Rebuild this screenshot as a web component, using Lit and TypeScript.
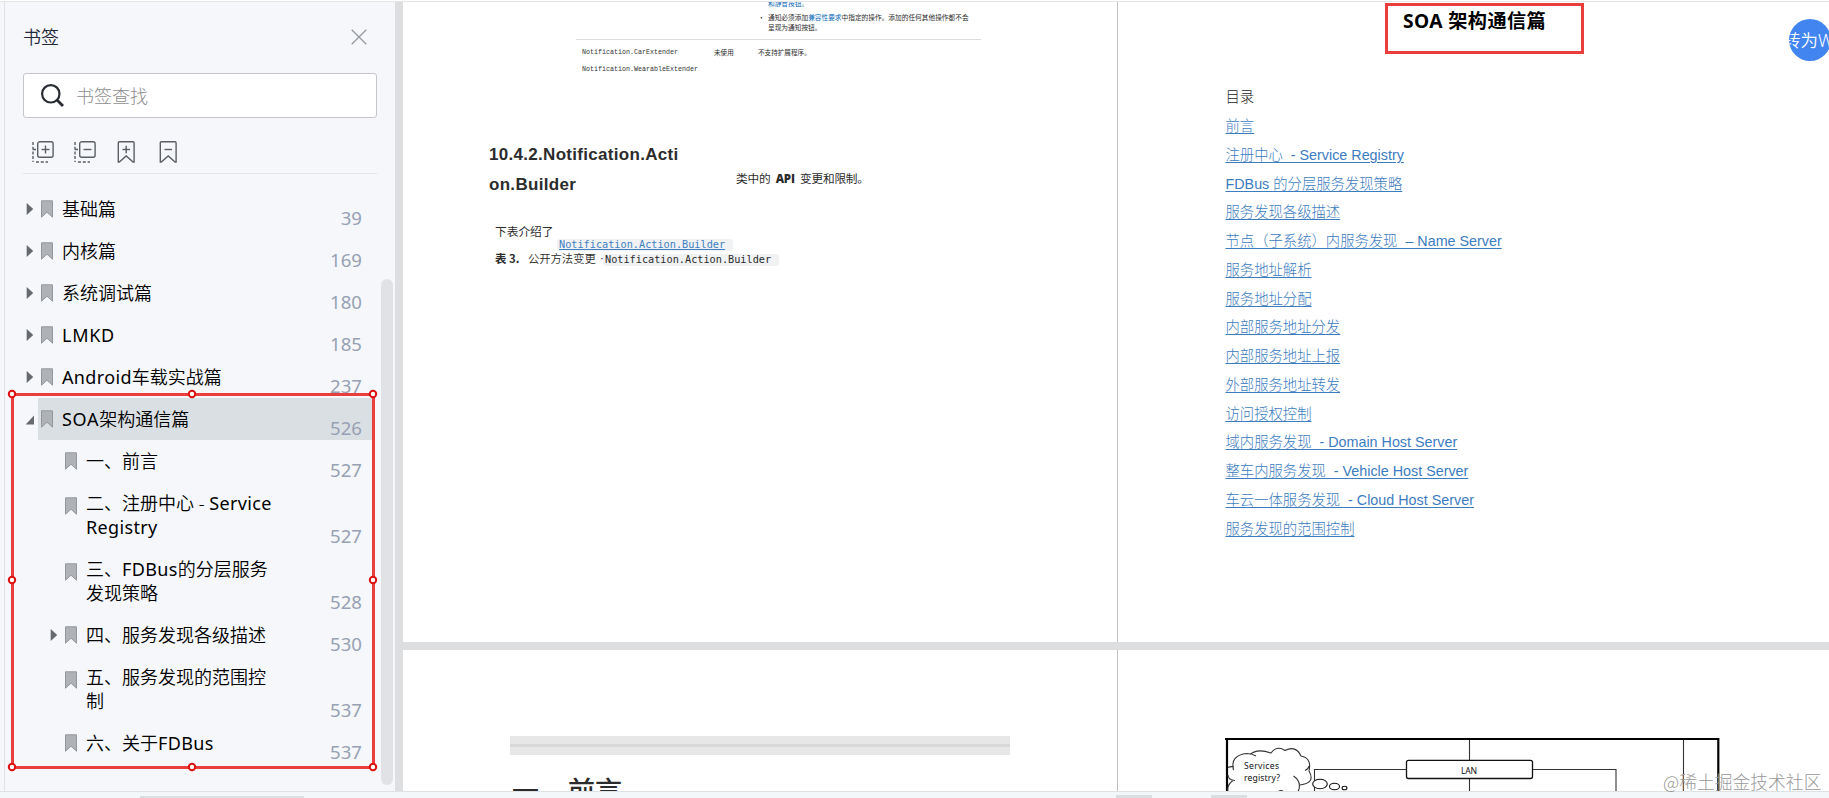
import { LitElement, html, svg, css } from "lit";
import { customElement } from "lit/decorators.js";
import { classMap } from "lit/directives/class-map.js";

interface Mark {
  lines: string[];
  page: number;
  level: number;
  arrow?: "closed" | "open";
  selected?: boolean;
}

const MARKS: Mark[] = [
  { lines: ["基础篇"], page: 39, level: 0, arrow: "closed" },
  { lines: ["内核篇"], page: 169, level: 0, arrow: "closed" },
  { lines: ["系统调试篇"], page: 180, level: 0, arrow: "closed" },
  { lines: ["LMKD"], page: 185, level: 0, arrow: "closed" },
  { lines: ["Android车载实战篇"], page: 237, level: 0, arrow: "closed" },
  { lines: ["SOA架构通信篇"], page: 526, level: 0, arrow: "open", selected: true },
  { lines: ["一、前言"], page: 527, level: 1 },
  { lines: ["二、注册中心 - Service", "Registry"], page: 527, level: 1 },
  { lines: ["三、FDBus的分层服务", "发现策略"], page: 528, level: 1 },
  { lines: ["四、服务发现各级描述"], page: 530, level: 1, arrow: "closed" },
  { lines: ["五、服务发现的范围控", "制"], page: 537, level: 1 },
  { lines: ["六、关于FDBus"], page: 537, level: 1 },
];

const TOC = [
  "前言",
  "注册中心  - Service Registry",
  "FDBus 的分层服务发现策略",
  "服务发现各级描述",
  "节点（子系统）内服务发现  – Name Server",
  "服务地址解析",
  "服务地址分配",
  "内部服务地址分发",
  "内部服务地址上报",
  "外部服务地址转发",
  "访问授权控制",
  "域内服务发现  - Domain Host Server",
  "整车内服务发现  - Vehicle Host Server",
  "车云一体服务发现  - Cloud Host Server",
  "服务发现的范围控制",
];

const HANDLES = [
  [12, 394], [192, 394], [373, 394], [12, 580], [373, 580], [12, 767], [192, 767], [373, 767],
];

@customElement("bookmark-panel")
class BookmarkPanel extends LitElement {
  static styles = css`
    :host { display: flex; flex-direction: column; width: 391px; height: 789px; box-sizing: border-box;
      background: #f5f7fa; border-left: 1px solid #dfe3e6; color: #000;
      font: 18px/24px "Noto Sans", "Noto Sans CJK SC", sans-serif; }
    svg { display: block; flex: none; }
    .head { display: flex; justify-content: space-between; align-items: center; height: 26px; padding: 22px 28px 0 18px; color: #23283c; font-weight: 350; }
    .search { display: flex; align-items: center; gap: 12px; box-sizing: border-box; width: 354px; height: 45px; margin: 23px 0 0 18px;
      padding-left: 17px; background: #fff; border: 1px solid #c4c6c9; border-radius: 3px; color: #8e8e8e; font-weight: 300; }
    .tools { display: flex; gap: 20px; height: 32px; width: 345px; margin: 23px 0 14px 18px; padding-left: 9px; border-bottom: 1px solid #e2e5e9; }
    .list { display: flex; flex-direction: column; }
    .row { display: flex; padding: 9px 12px 9px 0; width: 323px; margin-left: 33px; align-items: flex-start; position: relative; }
    .selected { background: #dadfe3; }
    .level1 { margin-left: 57px; width: 299px; }
    .flag { margin: 3px 0 0 3px; }
    .two .flag { margin-top: 6px; }
    .arrow { position: absolute; left: -13px; top: 15px; }
    .name { margin-left: 9px; flex: 1; font-weight: 350; white-space: nowrap; }
    .latin { font-weight: 400; letter-spacing: .35px; }
    .caps { letter-spacing: .7px; }
    .line { display: block; }
    .num { align-self: flex-end; position: relative; left: 1px; top: 9px; color: #97a1b4; font-weight: 400; font-size: 18.6px; }
  `;
  flagIcon() {
    return html`<svg class="flag" width="12" height="18" viewBox="0 0 12 18"><path d="M.5.8h11v16.4L6 12.2.5 17.2z" fill="#afb3b7" stroke="#94989c"/></svg>`;
  }
  arrowIcon(kind: string) {
    return html`<svg class="arrow" width="10" height="13" viewBox="0 0 10 13"><path d=${kind === "open" ? "M9 2.5v9H.7z" : "M1.700 0 8.200 6 1.700 12z"} fill="#66696d"/></svg>`;
  }
  groupTool(plus: boolean) {
    return html`<svg width="22" height="22" viewBox="0 0 22 22" fill="none" stroke="#5b5f64" stroke-width="1.4">
      <rect x="5.7" y=".8" width="15.4" height="15.4" rx="2"/><path d="M9.5 8.5h8"/>
      ${plus ? svg`<path d="M13.5 4.5v8"/>` : ""}
      <path d="M1 1v20" stroke-dasharray="3 1.7"/><path d="M1 8.5h4M4 21h12" stroke-dasharray="3 1.8"/></svg>`;
  }
  markTool(plus: boolean) {
    return html`<svg width="22" height="22" viewBox="0 0 22 22" fill="none" stroke="#5b5f64" stroke-width="1.4">
      <path d="M2.300 2q0-1.200 1.200-1.200h13.400q1.200 0 1.200 1.200v19h-1L10.200 15 3.300 21h-1z"/><path d="M6.500 8.500h7.500"/>
      ${plus ? svg`<path d="M10.200 4.800v7.500"/>` : ""}</svg>`;
  }
  label(text: string) {
    return text.split(/([A-Za-z]+)/).map((part) =>
      /^[A-Za-z]/.test(part)
        ? html`<span class=${classMap({ latin: true, caps: part === part.toUpperCase() })}>${part}</span>`
        : part);
  }
  render() {
    return html`
      <div class="head"><span>书签</span>
        <svg width="16" height="16" viewBox="0 0 16 16"><path d="M.7.7l14.6 14.6M15.3.7.7 15.3" stroke="#969a9e" stroke-width="1.3"/></svg></div>
      <div class="search">
        <svg width="23" height="23" viewBox="0 0 23 23" fill="none" stroke="#292d33"><circle cx="9.8" cy="9.8" r="8.7" stroke-width="2.2"/><path d="M16 16l6 6" stroke-width="2.8"/></svg>
        <span>书签查找</span></div>
      <div class="tools">${this.groupTool(true)}${this.groupTool(false)}${this.markTool(true)}${this.markTool(false)}</div>
      <div class="list">${MARKS.map((m) => html`
        <div class=${classMap({ row: true, selected: !!m.selected, level1: m.level === 1, two: m.lines.length > 1 })}>
          ${m.arrow ? this.arrowIcon(m.arrow) : ""}${this.flagIcon()}
          <div class="name">${m.lines.map((l) => html`<span class="line">${this.label(l)}</span>`)}</div>
          <span class="num">${m.page}</span>
        </div>`)}</div>`;
  }
}

@customElement("doc-sheet-left")
class DocSheetLeft extends LitElement {
  static styles = css`
    :host { display: block; width: 714px; height: 640px; overflow: hidden; background: #fff; color: #2c2c2c;
      font-family: "Noto Sans CJK SC", sans-serif; }
    .notes { height: 37.5px; margin: 0 136px 0 173px; padding-left: 192px; box-sizing: border-box; border-bottom: 1px solid #ddd;
      font-size: 6.69px; line-height: 10px; white-space: nowrap; overflow: hidden; }
    .note { display: block; position: relative; }
    .clip { height: 10px; margin-top: -4px; color: #0d6ab5; }
    .body { margin-top: 4px; }
    .dot { position: absolute; left: -10px; }
    .blue { color: #0d6ab5; }
    .cells { display: grid; grid-template-columns: 132px 44px auto; padding: 7px 0 0 179px; font-size: 6.6px; line-height: 10px; }
    .code { font-family: "Liberation Mono", monospace; font-size: 6.68px; color: #333; }
    .second { margin-top: 7px; }
    .heading { display: grid; grid-template-columns: 247px auto; margin: 66px 0 0 86px; }
    .h2 { font: bold 17px/30px "Liberation Sans", sans-serif; letter-spacing: .3px; }
    .h2 span { display: block; }
    .tail { padding-top: 29px; font-size: 11.7px; line-height: 18px; white-space: pre; letter-spacing: -.2px; }
    .heavy { font-family: "Open Sans"; font-weight: 800; font-size: 11.5px; }
    .intro { margin: 22px 0 0 92px; font-size: 11.7px; line-height: 18px; height: 17px; }
    .tag { display: block; width: 174px; height: 12px; padding-left: 2px; box-sizing: content-box; background: #f0f2f3; border-radius: 3px;
      font: 10.22px/12px "DejaVu Sans Mono", monospace; white-space: nowrap; }
    .link { margin-left: 154px; color: #3f80c2; text-decoration: underline; }
    .caption { display: flex; align-items: flex-start; margin-left: 92px; font-size: 11.4px; line-height: 15px; white-space: pre; }
    .caption .thin { margin-left: 9px; font-weight: 350; letter-spacing: -.1px; width: 75px; }
    .caption .pip { width: 3px; margin-left: -3px; font-family: "Liberation Sans"; }
    .caption .tag { margin: 3px 0 0 0; }
    .bold { width: 24px; font-weight: 700; }
  `;
  render() {
    return html`
      <div class="notes">
        <span class="note clip">和静音按钮。</span>
        <div class="note body"><span class="dot">•</span>通知必须添加<span class="blue">兼容性要求</span>中指定的操作。添加的任何其他操作都不会<br>呈现为通知按钮。</div>
      </div>
      <div class="cells"><span class="code">Notification.CarExtender</span><span>未使用</span><span>不支持扩展程序。</span>
        <span class="code second">Notification.WearableExtender</span></div>
      <div class="heading"><div class="h2"><span>10.4.2.Notification.Acti</span><span>on.Builder</span></div>
        <div class="tail">类中的 <span class="heavy"> API </span> 变更和限制。</div></div>
      <div class="intro">下表介绍了</div>
      <span class="tag link">Notification.Action.Builder</span>
      <div class="caption"><span class="bold">表 3.</span><span class="thin">公开方法变更</span><span class="pip">·</span><span class="tag">Notification.Action.Builder</span></div>`;
  }
}

@customElement("doc-sheet-toc")
class DocSheetToc extends LitElement {
  static styles = css`
    :host { display: block; height: 640px; overflow: hidden; background: #fff; font-family: "Liberation Sans", "Noto Sans CJK SC", sans-serif; }
    .title { display: block; box-sizing: border-box; width: 199px; height: 51px; margin: 1px 0 0 267px; padding: 0 0 0 15px;
      border: 3px solid #e93e3c; color: #000; font: bold 19.2px/30px "Noto Sans", "Noto Sans CJK SC", sans-serif; letter-spacing: .4px; white-space: nowrap; }
    .toc { display: flex; flex-direction: column; align-items: flex-start; margin: 29.4px 0 0 107.500px; font-size: 14.33px; line-height: 28.75px; font-weight: 300; white-space: pre; }
    .toc > * { height: 28.75px; }
    .label { color: #222; }
    .entry { color: #3c7cc0; text-decoration: underline; text-underline-offset: 2px; text-decoration-thickness: 1px; }
  `;
  render() {
    return html`<div class="title">SOA 架构通信篇</div>
      <div class="toc"><span class="label">目录</span>${TOC.map((t) => html`<a class="entry">${t}</a>`)}</div>`;
  }
}

@customElement("doc-sheet-chapter")
class DocSheetChapter extends LitElement {
  static styles = css`
    :host { display: block; width: 714px; height: 141px; overflow: hidden; background: #fff; }
    .banner { width: 500px; height: 19px; margin: 86px 0 0 107px; background: linear-gradient(#e7e7e7 8px, #d8d8d8 8px 11px, #e7e7e7 11px); }
    .title { display: flex; gap: 29px; margin: 15px 0 0 109px; font: 500 27px/40px "Noto Sans CJK SC", sans-serif; color: #2b2b2b; }
  `;
  render() {
    return html`<div class="banner"></div><div class="title"><span>一</span><span>前言</span></div>`;
  }
}

@customElement("doc-sheet-diagram")
class DocSheetDiagram extends LitElement {
  static styles = css`
    :host { display: block; height: 141px; overflow: hidden; background: #fff; }
    svg { display: block; }
    text { font: 8.6px "Noto Sans", sans-serif; fill: #111; stroke: none; }
  `;
  render() {
    return html`<svg width="711" height="141" viewBox="1118 650 711 141" fill="none" stroke="#333" stroke-width="1.1">
      <path d="M1225 739H1718.3V795M1227 738V795" stroke="#000" stroke-width="2.2"/>
      <path d="M1469.5 740V795M1683.5 740V795M1314.5 795V769.5H1616V795"/>
      <rect x="1406.5" y="760.3" width="126" height="18.2" rx="2" fill="#fff" stroke="#111" stroke-width="1.3"/>
      <path d="M1233.500 770Q1230 755 1247 753.500Q1252 753.500 1256 756M1250 754.500Q1257 748 1271 753Q1277 745 1285 750.500Q1296 745 1301 756Q1312 758 1309 771Q1316 783 1300 785M1293.500 776Q1301 781 1299 789L1297 795M1305 770.500Q1308.500 769 1309 766M1228 767.500Q1231 766 1234 767M1228 775Q1228 780 1235 780.500M1234 780Q1225 785 1229 795M1283 791Q1279 789 1276 795"/>
      <ellipse cx="1320" cy="784" rx="7.3" ry="4.800" fill="#fff" stroke="#111"/>
      <ellipse cx="1334.500" cy="786.500" rx="5" ry="3.300" fill="#fff" stroke="#111"/>
      <ellipse cx="1344.500" cy="788" rx="2.400" ry="1.800" fill="#fff" stroke="#111"/>
      <text x="1244" y="769" textLength="35">Services</text>
      <text x="1244" y="780.500" textLength="36">registry?</text>
      <text x="1461" y="773.500" textLength="16">LAN</text>
    </svg>`;
  }
}

@customElement("app-root")
class AppRoot extends LitElement {
  static styles = css`
    :host { display: block; position: relative; width: 1829px; height: 798px; overflow: hidden; background: #f5f7fa; }
    .edge { height: 2px; box-sizing: border-box; background: #fff; border-bottom: 1px solid #e3e5e6; }
    .work { display: flex; height: 789px; padding-left: 4px; background: linear-gradient(90deg, #f5f7fa 395px, #dcdedf 395px); }
    .docs { flex: 1; margin-left: 8px; display: grid; grid-template-columns: 714px 1fr; grid-template-rows: 640px 141px; row-gap: 8px; }
    .right { border-left: 1px solid #bfc1c3; }
    .status { display: grid; grid-template-columns: 140px 164px 812px 36px 59px 36px; align-items: end; height: 7px; box-sizing: border-box; border-top: 1px solid #dfe2e4; background: #f4f7f9; }
    .status i { height: 3px; background: #dadfe2; }
    .status .low { grid-column: 2; height: 2px; }
    .status .mid { grid-column: 4; }
    .status .end { grid-column: 6; }
    .thumb { position: absolute; left: 381px; top: 279px; width: 12px; height: 506px; border-radius: 6px; background: #e0e2e5; }
    .marks { position: absolute; left: 0; top: 0; }
    .convert { position: absolute; left: 1789px; top: 19px; width: 42px; height: 42px; border-radius: 50%; overflow: hidden; background: #4285f0;
      color: #fff; font: 350 17.5px/43px "Noto Sans", "Noto Sans CJK SC", sans-serif; white-space: nowrap; text-indent: -6px; }
    .watermark { position: absolute; left: 1663px; top: 767px; font: 300 17.8px/28px "Noto Sans CJK SC", sans-serif; color: #999; white-space: nowrap; }
  `;
  render() {
    return html`
      <div class="edge"></div>
      <div class="work">
        <bookmark-panel></bookmark-panel>
        <div class="docs">
          <doc-sheet-left></doc-sheet-left><doc-sheet-toc class="right"></doc-sheet-toc>
          <doc-sheet-chapter></doc-sheet-chapter><doc-sheet-diagram class="right"></doc-sheet-diagram>
        </div>
      </div>
      <div class="status"><i class="low"></i><i class="mid"></i><i class="end"></i></div>
      <div class="thumb"></div>
      <svg class="marks" width="400" height="798"><rect x="12.500" y="394.500" width="361" height="373" fill="none" stroke="#e93e3c" stroke-width="3"/>
        ${HANDLES.map(([x, y]) => svg`<circle cx=${x} cy=${y} r="3.200" fill="#fff" stroke="#dc1010" stroke-width="2"/>`)}</svg>
      <div class="convert">转为W</div>
      <div class="watermark">@稀土掘金技术社区</div>`;
  }
}
